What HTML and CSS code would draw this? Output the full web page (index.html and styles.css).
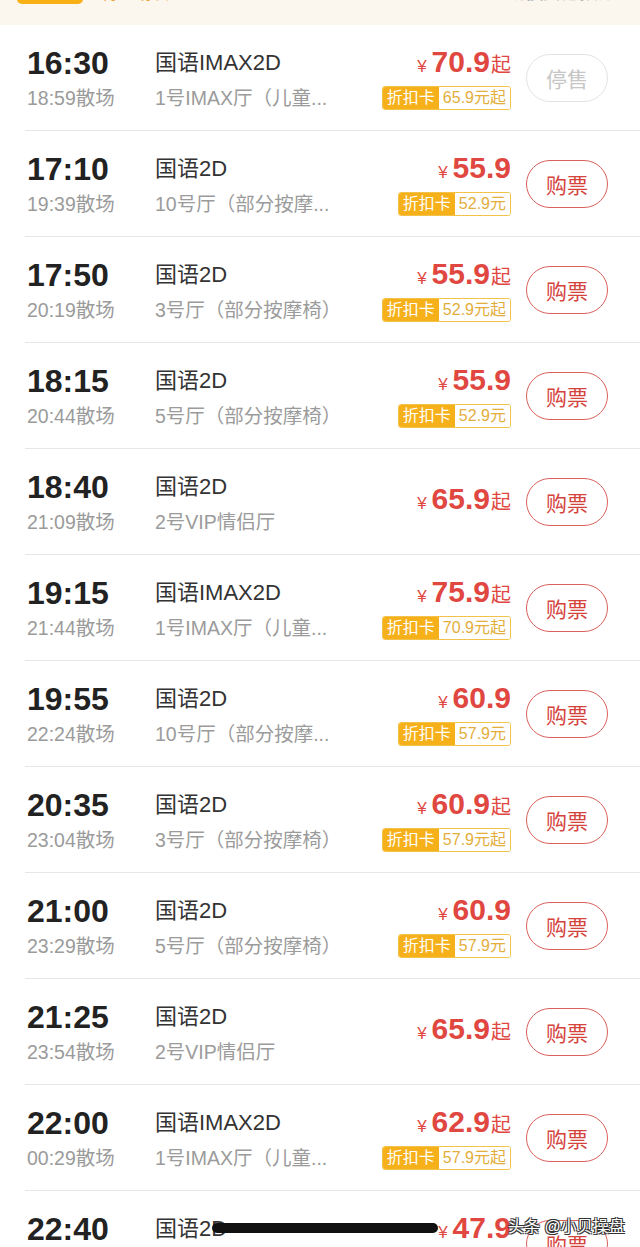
FILE: index.html
```html
<!DOCTYPE html>
<html lang="zh-CN">
<head>
    <meta charset="UTF-8">
    <meta name="viewport" content="width=device-width, initial-scale=1.0">
    <title>场次</title>
    <link rel="stylesheet" href="styles.css">
</head>
<body>
    <!-- top bar, mostly scrolled away -->
    <div class="topbar">
        <div class="tab-btn"></div>
        <span class="tab-label">特惠场次</span>
        <span class="top-right">切换其他影院 &gt;</span>
    </div>

    <div class="show-list">
        <div class="show-row">
            <div class="time-col">
                <div class="start">16:30</div>
                <div class="end">18:59散场</div>
            </div>
            <div class="info-col">
                <div class="lang">国语IMAX2D</div>
                <div class="hall">1号IMAX厅（儿童...</div>
            </div>
            <div class="price-col">
                <div class="price"><span class="yen">¥</span>70.9<span class="qi">起</span></div>
                <div class="card-tag"><span class="card-name">折扣卡</span><span class="card-price">65.9元起</span></div>
            </div>
            <div class="buy-btn stopped">停售</div>
        </div>

        <div class="show-row">
            <div class="time-col">
                <div class="start">17:10</div>
                <div class="end">19:39散场</div>
            </div>
            <div class="info-col">
                <div class="lang">国语2D</div>
                <div class="hall">10号厅（部分按摩...</div>
            </div>
            <div class="price-col">
                <div class="price"><span class="yen">¥</span>55.9</div>
                <div class="card-tag"><span class="card-name">折扣卡</span><span class="card-price">52.9元</span></div>
            </div>
            <div class="buy-btn">购票</div>
        </div>

        <div class="show-row">
            <div class="time-col">
                <div class="start">17:50</div>
                <div class="end">20:19散场</div>
            </div>
            <div class="info-col">
                <div class="lang">国语2D</div>
                <div class="hall">3号厅（部分按摩椅）</div>
            </div>
            <div class="price-col">
                <div class="price"><span class="yen">¥</span>55.9<span class="qi">起</span></div>
                <div class="card-tag"><span class="card-name">折扣卡</span><span class="card-price">52.9元起</span></div>
            </div>
            <div class="buy-btn">购票</div>
        </div>

        <div class="show-row">
            <div class="time-col">
                <div class="start">18:15</div>
                <div class="end">20:44散场</div>
            </div>
            <div class="info-col">
                <div class="lang">国语2D</div>
                <div class="hall">5号厅（部分按摩椅）</div>
            </div>
            <div class="price-col">
                <div class="price"><span class="yen">¥</span>55.9</div>
                <div class="card-tag"><span class="card-name">折扣卡</span><span class="card-price">52.9元</span></div>
            </div>
            <div class="buy-btn">购票</div>
        </div>

        <div class="show-row">
            <div class="time-col">
                <div class="start">18:40</div>
                <div class="end">21:09散场</div>
            </div>
            <div class="info-col">
                <div class="lang">国语2D</div>
                <div class="hall">2号VIP情侣厅</div>
            </div>
            <div class="price-col">
                <div class="price"><span class="yen">¥</span>65.9<span class="qi">起</span></div>
            </div>
            <div class="buy-btn">购票</div>
        </div>

        <div class="show-row">
            <div class="time-col">
                <div class="start">19:15</div>
                <div class="end">21:44散场</div>
            </div>
            <div class="info-col">
                <div class="lang">国语IMAX2D</div>
                <div class="hall">1号IMAX厅（儿童...</div>
            </div>
            <div class="price-col">
                <div class="price"><span class="yen">¥</span>75.9<span class="qi">起</span></div>
                <div class="card-tag"><span class="card-name">折扣卡</span><span class="card-price">70.9元起</span></div>
            </div>
            <div class="buy-btn">购票</div>
        </div>

        <div class="show-row">
            <div class="time-col">
                <div class="start">19:55</div>
                <div class="end">22:24散场</div>
            </div>
            <div class="info-col">
                <div class="lang">国语2D</div>
                <div class="hall">10号厅（部分按摩...</div>
            </div>
            <div class="price-col">
                <div class="price"><span class="yen">¥</span>60.9</div>
                <div class="card-tag"><span class="card-name">折扣卡</span><span class="card-price">57.9元</span></div>
            </div>
            <div class="buy-btn">购票</div>
        </div>

        <div class="show-row">
            <div class="time-col">
                <div class="start">20:35</div>
                <div class="end">23:04散场</div>
            </div>
            <div class="info-col">
                <div class="lang">国语2D</div>
                <div class="hall">3号厅（部分按摩椅）</div>
            </div>
            <div class="price-col">
                <div class="price"><span class="yen">¥</span>60.9<span class="qi">起</span></div>
                <div class="card-tag"><span class="card-name">折扣卡</span><span class="card-price">57.9元起</span></div>
            </div>
            <div class="buy-btn">购票</div>
        </div>

        <div class="show-row">
            <div class="time-col">
                <div class="start">21:00</div>
                <div class="end">23:29散场</div>
            </div>
            <div class="info-col">
                <div class="lang">国语2D</div>
                <div class="hall">5号厅（部分按摩椅）</div>
            </div>
            <div class="price-col">
                <div class="price"><span class="yen">¥</span>60.9</div>
                <div class="card-tag"><span class="card-name">折扣卡</span><span class="card-price">57.9元</span></div>
            </div>
            <div class="buy-btn">购票</div>
        </div>

        <div class="show-row">
            <div class="time-col">
                <div class="start">21:25</div>
                <div class="end">23:54散场</div>
            </div>
            <div class="info-col">
                <div class="lang">国语2D</div>
                <div class="hall">2号VIP情侣厅</div>
            </div>
            <div class="price-col">
                <div class="price"><span class="yen">¥</span>65.9<span class="qi">起</span></div>
            </div>
            <div class="buy-btn">购票</div>
        </div>

        <div class="show-row">
            <div class="time-col">
                <div class="start">22:00</div>
                <div class="end">00:29散场</div>
            </div>
            <div class="info-col">
                <div class="lang">国语IMAX2D</div>
                <div class="hall">1号IMAX厅（儿童...</div>
            </div>
            <div class="price-col">
                <div class="price"><span class="yen">¥</span>62.9<span class="qi">起</span></div>
                <div class="card-tag"><span class="card-name">折扣卡</span><span class="card-price">57.9元起</span></div>
            </div>
            <div class="buy-btn">购票</div>
        </div>

        <div class="show-row">
            <div class="time-col">
                <div class="start">22:40</div>
                <div class="end">01:09散场</div>
            </div>
            <div class="info-col">
                <div class="lang">国语2D</div>
                <div class="hall">10号厅（部分按摩...</div>
            </div>
            <div class="price-col">
                <div class="price"><span class="yen">¥</span>47.9</div>
                <div class="card-tag"><span class="card-name">折扣卡</span><span class="card-price">44.9元</span></div>
            </div>
            <div class="buy-btn">购票</div>
        </div>
    </div>

    <!-- overlays from the screenshot -->
    <div class="swipe-bar"></div>
    <div class="watermark">头条 @小贝操盘</div>
</body>
</html>
```

FILE: styles.css
```css
body {
    font-family: "Liberation Sans", "Noto Sans CJK SC", sans-serif;
    background-color: #fff;
    margin: 0;
    padding: 0;
    height: 1247px;
    overflow: hidden;
    position: relative;
}

/* Top bar */
.topbar {
    height: 25px;
    background-color: #fbf7ee;
    display: flex;
    align-items: flex-start;
    padding: 0 14px 0 17px;
    overflow: hidden;
}

.tab-btn {
    width: 66px;
    height: 30px;
    margin-top: -26px;
    border-radius: 5px;
    background-color: #f8b015;
}

.tab-label {
    margin-left: 18px;
    margin-top: -16px;
    font-size: 17px;
    line-height: 20px;
    color: #e9a73d;
}

.top-right {
    margin-left: auto;
    margin-top: -16px;
    font-size: 17px;
    line-height: 20px;
    color: #b5b5b5;
}

/* Show list */
.show-list {
    padding-left: 25px;
}

.show-row {
    display: flex;
    align-items: center;
    height: 105px;
    border-bottom: 1px solid #e6e6e6;
    padding: 0 32px 0 2px;
}

.time-col {
    width: 128px;
    flex-shrink: 0;
}

.start {
    font-size: 32px;
    line-height: 36px;
    font-weight: bold;
    color: #222;
}

.end,
.hall {
    margin-top: 5px;
    font-size: 19.5px;
    line-height: 24px;
    color: #9b9b9b;
}

.info-col {
    flex: 1;
    min-width: 0;
    white-space: nowrap;
}

.lang {
    font-size: 22px;
    line-height: 36px;
    color: #333;
}

.hall {
    overflow: hidden;
    text-overflow: ellipsis;
}

.price-col {
    display: flex;
    flex-direction: column;
    align-items: flex-end;
}

.price {
    font-size: 30px;
    line-height: 34px;
    font-weight: bold;
    color: #df4740;
    white-space: nowrap;
}

.price .yen {
    font-size: 17px;
    font-weight: normal;
    margin-right: 5px;
}

.price .qi {
    font-size: 20px;
    font-weight: normal;
    margin-left: 1px;
}

.card-tag {
    display: flex;
    margin-top: 2px;
    height: 22px;
    border: 1px solid #f3c24a;
    border-radius: 3px;
    overflow: hidden;
    font-size: 16px;
    line-height: 22px;
    white-space: nowrap;
}

.card-name {
    background-color: #f6b11a;
    color: #fff;
    padding: 0 4px;
}

.card-price {
    background-color: #fff;
    color: #e3ae3c;
    padding: 0 4px;
}

.buy-btn {
    flex-shrink: 0;
    width: 80px;
    height: 46px;
    margin-left: 15px;
    border: 1.5px solid #d9615b;
    border-radius: 25px;
    display: flex;
    align-items: center;
    justify-content: center;
    font-size: 21px;
    color: #d5433d;
}

.buy-btn.stopped {
    border-color: #e3e3e3;
    color: #c6c6c6;
}

/* Overlays */
.swipe-bar {
    position: absolute;
    left: 212px;
    top: 1223px;
    width: 226px;
    height: 10px;
    border-radius: 5px;
    background-color: #111;
}

.watermark {
    position: absolute;
    left: 508px;
    top: 1213px;
    font-size: 16px;
    color: #fff;
    text-shadow: 1px 1px 0 #333, -1px -1px 0 #333, 1px -1px 0 #333, -1px 1px 0 #333;
}
```
